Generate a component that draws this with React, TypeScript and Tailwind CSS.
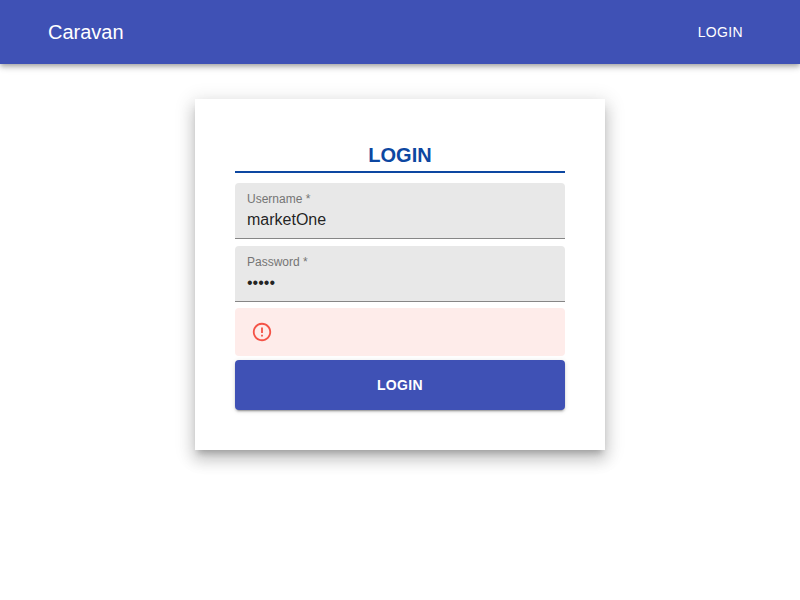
import { useState } from "react";
import type { FormEvent } from "react";

type FieldProps = {
  id: string;
  label: string;
  type: string;
  value: string;
  onChange: (value: string) => void;
};

function Field({ id, label, type, value, onChange }: FieldProps) {
  return (
    <div className="flex h-14 flex-col gap-[3px] rounded-t border-b border-[#868686] bg-[#e8e8e8] px-3 pt-2">
      <label htmlFor={id} className="text-xs leading-4 text-[#757575]">
        {label} *
      </label>
      <input
        id={id}
        type={type}
        required
        value={value}
        onChange={(event) => onChange(event.target.value)}
        className="h-[19px] w-full bg-transparent text-base leading-[19px] text-black/87 outline-none"
      />
    </div>
  );
}

function ErrorIcon() {
  return (
    <svg viewBox="0 0 24 24" className="size-[22px] fill-[#f44336] opacity-90" aria-hidden="true">
      <path d="M11 15h2v2h-2zm0-8h2v6h-2zm.99-5C6.47 2 2 6.48 2 12s4.47 10 9.99 10C17.52 22 22 17.52 22 12S17.52 2 11.99 2zM12 20c-4.42 0-8-3.58-8-8s3.58-8 8-8 8 3.58 8 8-3.58 8-8 8z" />
    </svg>
  );
}

export default function App() {
  const [username, setUsername] = useState("marketOne");
  const [password, setPassword] = useState("admin");

  const handleSubmit = (event: FormEvent) => event.preventDefault();

  return (
    <div className="min-h-screen bg-white font-['Liberation_Sans',Arial,sans-serif]">
      <header className="flex h-16 items-center justify-between bg-[#3f51b5] px-12 text-white shadow-[0_2px_4px_-1px_rgba(0,0,0,0.2),0_4px_5px_0_rgba(0,0,0,0.14),0_1px_10px_0_rgba(0,0,0,0.12)]">
        <span className="text-xl">Caravan</span>
        <a href="#login" className="px-[9px] py-2 text-sm tracking-wide">
          LOGIN
        </a>
      </header>

      <main className="px-4 py-[35px]">
        <form
          onSubmit={handleSubmit}
          className="mx-auto w-full max-w-[410px] bg-white p-10 shadow-[0_6px_6px_-3px_rgba(0,0,0,0.2),0_10px_14px_1px_rgba(0,0,0,0.14),0_4px_18px_3px_rgba(0,0,0,0.12)]"
        >
          <h1 className="mb-[10px] border-b-2 border-[#0d47a1] text-center text-xl leading-8 font-bold text-[#0d47a1]">
            LOGIN
          </h1>
          <div className="flex flex-col gap-[7px]">
            <Field id="username" label="Username" type="text" value={username} onChange={setUsername} />
            <Field id="password" label="Password" type="password" value={password} onChange={setPassword} />
          </div>
          <div role="alert" className="mt-[6px] mb-1 flex h-12 items-center rounded bg-[#feecea] px-4">
            <ErrorIcon />
          </div>
          <button
            type="submit"
            className="h-[50px] w-full rounded bg-[#3f51b5] text-sm font-bold tracking-wide text-white shadow-[0_3px_1px_-2px_rgba(0,0,0,0.2),0_2px_2px_0_rgba(0,0,0,0.14),0_1px_5px_0_rgba(0,0,0,0.12)]"
          >
            LOGIN
          </button>
        </form>
      </main>
    </div>
  );
}
